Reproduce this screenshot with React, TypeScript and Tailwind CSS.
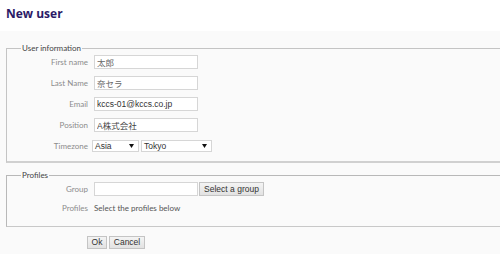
import React from "react";

const labelCls = "w-[67px] text-right text-[8px] leading-[14px] text-[#8c8c8c] [font-family:Lato,'Open_Sans',sans-serif]";
const inputBase = "h-[14px] w-[104px] border border-[#d6d6d6] bg-white px-[2px] text-[8.5px] leading-[12px] outline-none [font-family:'Liberation_Sans','Noto_Sans_CJK_JP',sans-serif]";

function Row({ label, children }: { label: string; children: React.ReactNode }) {
  return (
    <div className="flex items-center gap-[6px]">
      <div className={labelCls}>{label}</div>
      {children}
    </div>
  );
}

function FakeSelect({ value, width }: { value: string; width: string }) {
  return (
    <div className={`flex h-[12px] ${width} items-center justify-between border border-[#d6d6d6] bg-white pl-[2px] pr-[4px] text-[8.5px] leading-[10px] text-[#333] [font-family:'Liberation_Sans',sans-serif]`}>
      <span>{value}</span>
      <svg width="5" height="4" viewBox="0 0 5 4">
        <path d="M0 0 H5 L2.5 4 Z" fill="#111" />
      </svg>
    </div>
  );
}

export default function App() {
  return (
    <div className="h-[254px] w-[500px] overflow-hidden bg-white">
      <div className="h-[31px] px-[6px] pt-[6px]">
        <h1 className="text-[12px] font-bold leading-[16px] text-[#2b1a66] [font-family:'Open_Sans',sans-serif]">New user</h1>
      </div>
      <div className="h-[223px] bg-[#fafafa] pl-[6px] pt-[11px]">
        <fieldset className="m-0 border-t border-l border-b-2 border-[#c4c4c4] border-b-[#d0d0d0] pb-[8px] pl-[14px] pr-0 pt-[1px]">
          <legend className="px-[1px] text-[8px] leading-[12px] text-[#444] [font-family:Lato,'Open_Sans',sans-serif]">User information</legend>
          <div className="flex flex-col gap-[7px]">
            <Row label="First name">
              <input className={`${inputBase} text-[#666]`} defaultValue="太郎" />
            </Row>
            <Row label="Last Name">
              <input className={`${inputBase} text-[#666]`} defaultValue="奈セラ" />
            </Row>
            <Row label="Email">
              <input className={`${inputBase} text-[#333]`} defaultValue="kccs-01@kccs.co.jp" />
            </Row>
            <Row label="Position">
              <input className={`${inputBase} text-[#444]`} defaultValue="A株式会社" />
            </Row>
            <Row label="Timezone">
              <div className="-ml-[2px] flex gap-[2px]">
                <FakeSelect value="Asia" width="w-[47px]" />
                <FakeSelect value="Tokyo" width="w-[71px]" />
              </div>
            </Row>
          </div>
        </fieldset>

        <fieldset className="m-0 mt-[6px] border-t border-l border-b border-[#b8b8b8] border-b-[#c8c8c8] pb-[11px] pl-[14px] pr-0 pt-[1px]">
          <legend className="px-[1px] text-[8px] leading-[12px] text-[#444] [font-family:Lato,'Open_Sans',sans-serif]">Profiles</legend>
          <div className="flex flex-col gap-[5px]">
            <div className="flex items-center gap-[6px]">
              <div className={labelCls}>Group</div>
              <input className={`${inputBase} text-[#333]`} defaultValue="" />
              <button className="-ml-[5px] h-[14px] w-[65px] border border-[#c4c4c4] bg-gradient-to-b from-[#f4f4f4] to-[#e2e2e2] text-[8.5px] leading-[12px] text-[#333] [font-family:'Liberation_Sans',sans-serif]">Select a group</button>
            </div>
            <Row label="Profiles">
              <div className="text-[8px] leading-[12px] text-[#555] [font-family:Lato,'Open_Sans',sans-serif]">Select the profiles below</div>
            </Row>
          </div>
        </fieldset>

        <div className="mt-[9px] flex gap-[2px] pl-[81px]">
          <button className="h-[13px] w-[20px] border border-[#c4c4c4] bg-gradient-to-b from-[#f4f4f4] to-[#e2e2e2] text-[8.5px] leading-[11px] text-[#333] [font-family:'Liberation_Sans',sans-serif]">Ok</button>
          <button className="h-[13px] w-[36px] border border-[#c4c4c4] bg-gradient-to-b from-[#f4f4f4] to-[#e2e2e2] text-[8.5px] leading-[11px] text-[#333] [font-family:'Liberation_Sans',sans-serif]">Cancel</button>
        </div>
      </div>
    </div>
  );
}
